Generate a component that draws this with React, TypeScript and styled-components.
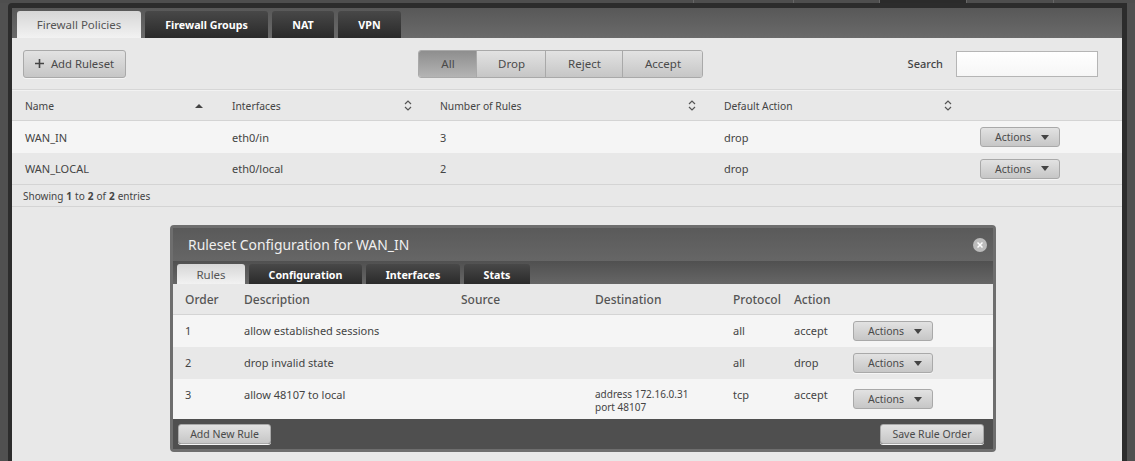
import styled, { createGlobalStyle } from 'styled-components';

const GlobalStyle = createGlobalStyle`
  html, body {
    margin: 0;
    padding: 0;
    width: 1135px;
    height: 461px;
    overflow: hidden;
    background: #505050;
    font-family: 'Noto Sans', 'Open Sans', sans-serif;
    font-size: 11px;
    color: #444;
  }
`;

const TopStrip = styled.div`
  height: 3px;
  background: #4e4e4e;
  display: flex;
  justify-content: flex-end;
`;

const TopCell = styled.div<{ $w: number; $dark?: boolean }>`
  width: ${p => p.$w}px;
  box-sizing: border-box;
  background: ${p => (p.$dark ? '#2b2b2b' : '#4e4e4e')};
  border-left: 1px solid #666;
`;

const Frame = styled.div`
  width: 1119px;
  height: 458px;
  margin-left: 8px;
  box-sizing: border-box;
  background: #2c2c2c;
  border-radius: 4px 0 0 0;
  padding: 5px 5px 0 4px;
`;

const Shell = styled.div`
  height: 453px;
  background: #e8e8e8;
  display: flex;
  flex-direction: column;
`;

const TabBar = styled.div`
  height: 30px;
  flex: none;
  padding: 3px 0 0 5px;
  box-sizing: border-box;
  display: flex;
  gap: 4px;
  background: linear-gradient(#585858, #6a6a6a);
`;

const Tab = styled.div<{ $w: number; $active?: boolean }>`
  width: ${p => p.$w}px;
  height: 27px;
  box-sizing: border-box;
  border-radius: 3px 3px 0 0;
  display: flex;
  align-items: center;
  justify-content: center;
  font-size: ${p => (p.$active ? 11.5 : 10.7)}px;
  font-weight: ${p => (p.$active ? 400 : 700)};
  color: ${p => (p.$active ? '#555' : '#fff')};
  background: ${p => (p.$active ? 'linear-gradient(#d6d6d6, #f2f2f2)' : 'linear-gradient(#484848, #2a2a2a)')};
`;

const Toolbar = styled.div`
  height: 52px;
  flex: none;
  box-sizing: border-box;
  border-bottom: 1px solid #d6d6d6;
  padding: 0 24px 0 11px;
  display: grid;
  grid-template-columns: 1fr auto 1fr;
  align-items: center;
`;

const Button = styled.button`
  font-family: inherit;
  font-size: 11.3px;
  color: #4a4a4a;
  height: 28px;
  padding: 0;
  box-sizing: border-box;
  border: 1px solid #a9a9a9;
  border-radius: 3px;
  background: linear-gradient(#e2e2e2, #c6c6c6);
  display: inline-flex;
  align-items: center;
  justify-content: center;
  box-shadow: 0 1px 0 #f5f5f5;
`;

const AddButton = styled(Button)`
  width: 103px;
  gap: 7px;
  justify-self: start;
`;

const Segments = styled.div`
  display: flex;
  border: 1px solid #a9a9a9;
  border-radius: 3px;
  height: 28px;
  box-sizing: border-box;
  overflow: hidden;
`;

const Segment = styled.div<{ $w: number; $on?: boolean }>`
  width: ${p => p.$w}px;
  box-sizing: border-box;
  display: flex;
  align-items: center;
  justify-content: center;
  font-size: 11.5px;
  color: #4a4a4a;
  padding-left: 1px;
  border-right: 1px solid #a9a9a9;
  background: ${p => (p.$on ? 'linear-gradient(#8e8e8e, #b4b4b4)' : 'linear-gradient(#e2e2e2, #c6c6c6)')};
  &:last-child {
    border-right: none;
  }
`;

const SearchBox = styled.div`
  justify-self: end;
  display: flex;
  align-items: center;
  gap: 13px;
  font-size: 11px;
  font-weight: 500;
`;

const SearchInput = styled.div`
  width: 142px;
  height: 26px;
  box-sizing: border-box;
  border: 1px solid #b5b5b5;
  background: linear-gradient(#fff, #f6f6f6);
`;

const HeadRow = styled.div`
  height: 31px;
  flex: none;
  box-sizing: border-box;
  border-top: 1px solid #f2f2f2;
  border-bottom: 1px solid #d4d4d4;
  display: grid;
  grid-template-columns: 207px 208px 284px 1fr;
  align-items: center;
  padding-left: 13px;
  font-size: 10.3px;
`;

const HeadCell = styled.div<{ $w: number }>`
  width: ${p => p.$w}px;
  display: flex;
  align-items: center;
  justify-content: space-between;
`;

const DataRow = styled.div<{ $alt?: boolean }>`
  height: 32px;
  flex: none;
  box-sizing: border-box;
  display: grid;
  grid-template-columns: 207px 208px 284px 256px 1fr;
  align-items: center;
  padding-left: 13px;
  font-size: 11px;
  background: ${p => (p.$alt ? '#e8e8e8' : '#f5f5f5')};
  border-bottom: ${p => (p.$alt ? '1px solid #d4d4d4' : 'none')};
`;

const ActionsBtn = styled(Button)`
  width: 80px;
  height: 20px;
  font-size: 10.5px;
  gap: 10px;
  justify-content: flex-start;
  padding-left: 14px;
`;

const Info = styled.div`
  height: 22px;
  flex: none;
  box-sizing: border-box;
  border-bottom: 1px solid #d4d4d4;
  padding-left: 11px;
  font-size: 10px;
  display: flex;
  align-items: center;
  gap: 3px;
`;

const Content = styled.div`
  flex: 1;
  display: flex;
  flex-direction: column;
  align-items: flex-start;
  padding: 18px 0 0 158px;
`;

const Modal = styled.div`
  width: 826px;
  height: 227px;
  box-sizing: border-box;
  border: 3px solid #6e6e6e;
  border-radius: 4px;
  background: #4f4f4f;
  display: flex;
  flex-direction: column;
`;

const ModalHead = styled.div`
  height: 33px;
  flex: none;
  box-sizing: border-box;
  padding: 0 6px 0 15px;
  display: flex;
  align-items: center;
  justify-content: space-between;
  color: #f0f0f0;
  font-size: 13.9px;
  background: linear-gradient(#5a5a5a, #666);
`;

const CloseDot = styled.div`
  width: 14px;
  height: 14px;
  border-radius: 50%;
  background: #bcbcbc;
  display: flex;
  align-items: center;
  justify-content: center;
`;

const ModalTabs = styled.div`
  height: 23px;
  flex: none;
  box-sizing: border-box;
  padding: 3px 0 0 4px;
  display: flex;
  gap: 4px;
  background: linear-gradient(#505050, #666);
`;

const ModalTab = styled(Tab)`
  height: 20px;
  padding-top: 1px;
`;

const RuleHead = styled.div`
  height: 31px;
  flex: none;
  box-sizing: border-box;
  border-bottom: 1px solid #d4d4d4;
  background: #e8e8e8;
  font-size: 12px;
  font-weight: 500;
  color: #555;
  display: grid;
  grid-template-columns: 59px 217px 134px 138px 61px 59px;
  align-items: center;
  padding-left: 12px;
`;

const RuleRow = styled.div<{ $alt?: boolean; $tall?: boolean }>`
  height: ${p => (p.$tall ? 40 : 32)}px;
  flex: none;
  box-sizing: border-box;
  display: grid;
  grid-template-columns: 59px 217px 134px 138px 61px 59px 1fr;
  align-items: start;
  padding: 8px 0 0 12px;
  font-size: 11px;
  background: ${p => (p.$alt ? '#e8e8e8' : '#f5f5f5')};
`;

const RuleActions = styled.div<{ $low?: boolean }>`
  margin-top: ${p => (p.$low ? 2 : -2)}px;
`;

const Address = styled.div`
  font-size: 10px;
  line-height: 13px;
  margin-top: 1px;
`;

const ModalFoot = styled.div`
  flex: 1;
  display: flex;
  align-items: center;
  justify-content: space-between;
  padding: 0 9px 0 5px;
  background: #4f4f4f;
`;

const FootBtn = styled(Button)<{ $w: number }>`
  width: ${p => p.$w}px;
  height: 20px;
  font-size: 10.5px;
`;

const Sortable = () => (
  <svg width="8" height="11" viewBox="0 0 8 11">
    <path d="M1 4l3-3 3 3M1 7l3 3 3-3" fill="none" stroke="#555" strokeWidth="1.2" />
  </svg>
);

const Asc = () => (
  <svg width="8" height="5" viewBox="0 0 8 5">
    <path d="M0 5l4-4 4 4z" fill="#444" />
  </svg>
);

const Caret = () => (
  <svg width="8" height="5" viewBox="0 0 8 5">
    <path d="M0 0h8l-4 5z" fill="#444" />
  </svg>
);

const Actions = () => (
  <ActionsBtn>
    Actions <Caret />
  </ActionsBtn>
);

const App = () => (
  <>
    <GlobalStyle />
    <TopStrip>
      <TopCell $w={100} />
      <TopCell $w={86} />
      <TopCell $w={87} $dark />
      <TopCell $w={87} />
      <TopCell $w={82} />
    </TopStrip>
    <Frame>
      <Shell>
        <TabBar>
          <Tab $w={124} $active>Firewall Policies</Tab>
          <Tab $w={123}>Firewall Groups</Tab>
          <Tab $w={62}>NAT</Tab>
          <Tab $w={63}>VPN</Tab>
        </TabBar>
        <Toolbar>
          <AddButton>
            <svg width="9" height="9" viewBox="0 0 9 9">
              <path d="M4.5 0v9M0 4.5h9" stroke="#444" strokeWidth="1.6" />
            </svg>
            Add Ruleset
          </AddButton>
          <Segments>
            <Segment $w={58} $on>All</Segment>
            <Segment $w={69}>Drop</Segment>
            <Segment $w={77}>Reject</Segment>
            <Segment $w={79}>Accept</Segment>
          </Segments>
          <SearchBox>
            Search
            <SearchInput />
          </SearchBox>
        </Toolbar>
        <HeadRow>
          <HeadCell $w={178}>Name <Asc /></HeadCell>
          <HeadCell $w={180}>Interfaces <Sortable /></HeadCell>
          <HeadCell $w={256}>Number of Rules <Sortable /></HeadCell>
          <HeadCell $w={228}>Default Action <Sortable /></HeadCell>
        </HeadRow>
        <DataRow>
          <div>WAN_IN</div>
          <div>eth0/in</div>
          <div>3</div>
          <div>drop</div>
          <Actions />
        </DataRow>
        <DataRow $alt>
          <div>WAN_LOCAL</div>
          <div>eth0/local</div>
          <div>2</div>
          <div>drop</div>
          <Actions />
        </DataRow>
        <Info>
          Showing <b>1</b> to <b>2</b> of <b>2</b> entries
        </Info>
        <Content>
          <Modal>
            <ModalHead>
              Ruleset Configuration for WAN_IN
              <CloseDot>
                <svg width="6" height="6" viewBox="0 0 6 6">
                  <path d="M0.5 0.5l5 5M5.5 0.5l-5 5" stroke="#fff" strokeWidth="1.5" />
                </svg>
              </CloseDot>
            </ModalHead>
            <ModalTabs>
              <ModalTab $w={68} $active>Rules</ModalTab>
              <ModalTab $w={113}>Configuration</ModalTab>
              <ModalTab $w={94}>Interfaces</ModalTab>
              <ModalTab $w={66}>Stats</ModalTab>
            </ModalTabs>
            <RuleHead>
              <div>Order</div>
              <div>Description</div>
              <div>Source</div>
              <div>Destination</div>
              <div>Protocol</div>
              <div>Action</div>
            </RuleHead>
            <RuleRow>
              <div>1</div>
              <div>allow established sessions</div>
              <div />
              <div />
              <div>all</div>
              <div>accept</div>
              <RuleActions><Actions /></RuleActions>
            </RuleRow>
            <RuleRow $alt>
              <div>2</div>
              <div>drop invalid state</div>
              <div />
              <div />
              <div>all</div>
              <div>drop</div>
              <RuleActions><Actions /></RuleActions>
            </RuleRow>
            <RuleRow $tall>
              <div>3</div>
              <div>allow 48107 to local</div>
              <div />
              <Address>address 172.16.0.31<br />port 48107</Address>
              <div>tcp</div>
              <div>accept</div>
              <RuleActions $low><Actions /></RuleActions>
            </RuleRow>
            <ModalFoot>
              <FootBtn $w={93}>Add New Rule</FootBtn>
              <FootBtn $w={104}>Save Rule Order</FootBtn>
            </ModalFoot>
          </Modal>
        </Content>
      </Shell>
    </Frame>
  </>
);

export default App;
